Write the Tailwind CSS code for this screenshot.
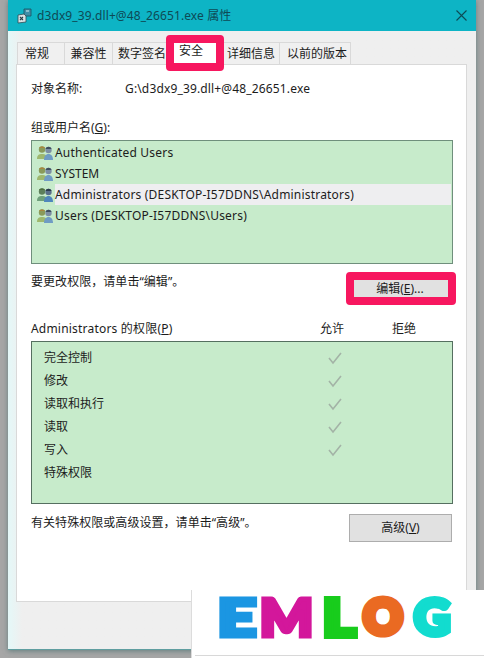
<!doctype html>
<html><head><meta charset="utf-8"><script src="https://cdn.jsdelivr.net/npm/@tailwindcss/browser@4"></script></head>
<body class="m-0 p-0">
<div class="relative w-[484px] h-[658px] overflow-hidden bg-[#a6a6a6] font-['Noto_Sans','Noto_Sans_CJK_SC',sans-serif] text-[12px] leading-[16px] text-[#1c1c1c]">
  <div class="ml-[8px] w-[468px] h-[650px] flex flex-col border-b border-[#5f9ea0] bg-linear-to-r from-[#e4f8f8] to-[#efefef] to-[3%] shadow-[0_1px_5px_rgba(70,110,110,0.7)]">
    <div class="h-[31px] shrink-0 bg-[#0db4c5] flex items-center pl-[9px] pr-[9px] text-[#0d4a55]">
      <svg class="w-[16px] h-[16px] mr-[4px]" viewBox="0 0 16 16"><path d="M7 1h7v7H9L7 6z" fill="#3f8fa8" stroke="#17505f" stroke-width=".8"/><path d="M9 3h3" stroke="#d5eef2" stroke-width="1"/><path d="M1 7l6-1 2 2v6l-8 1z" fill="#d8e2e4" stroke="#2f4d55" stroke-width=".8"/><path d="M3 9l3 3M6 9l-3 3" stroke="#26414a" stroke-width="1.1"/></svg>
      <span class="text-[12px] tracking-[0.1px]">d3dx9_39.dll+@48_26651.exe 属性</span>
      <svg class="ml-auto w-[11px] h-[11px]" viewBox="0 0 11 11"><path d="M.5.5l10 10M10.5.5l-10 10" stroke="#0d4a55" stroke-width="1.1" fill="none"/></svg>
    </div>
    <div class="ml-[9px] mt-[11px] h-[22px] flex items-stretch shrink-0 leading-[21px]">
      <div class="w-[48px] pl-[7px] bg-[#f0f0f0] border-t border-x border-[#d9d9d9]">常规</div>
      <div class="w-[48px] text-center bg-[#f0f0f0] border-t border-r border-[#d9d9d9]">兼容性</div>
      <div class="w-[54px] pl-[5px] bg-[#f0f0f0] border-t border-r border-[#d9d9d9] whitespace-nowrap">数字签名</div>
      <div class="w-[54px]"></div>
      <div class="w-[59px] text-right pr-[4px] bg-[#f0f0f0] border-t border-r border-[#d9d9d9] whitespace-nowrap">详细信息</div>
      <div class="w-[71px] pl-[7px] bg-[#f0f0f0] border-t border-r border-[#d9d9d9] whitespace-nowrap">以前的版本</div>
    </div>
    <div class="ml-[8px] w-[451px] h-[538px] shrink-0 bg-white border border-[#d9d9d9] px-[14px] pt-[16px]">
      <div class="flex h-[16px]"><span class="w-[94px]">对象名称:</span><span class="tracking-[0.15px]">G:\d3dx9_39.dll+@48_26651.exe</span></div>
      <div class="mt-[23px] h-[16px]">组或用户名(<span class="underline">G</span>):</div>
      <div class="mt-[4px] w-[422px] h-[124px] border border-[#6f8f7c] bg-[#c7ebcb] py-[1px] pl-[5px] pr-[1px] flex flex-col">
        <div class="h-[21px] flex items-center gap-[1px]">
          <svg class="w-[17px] h-[16px] shrink-0" viewBox="0 0 17 16"><circle cx="5" cy="4.5" r="3.2" fill="#8a9a5a"/><path d="M2 3c1-2 5-2 6 0z" fill="#a8863f"/><path d="M0 14c0-4 2-5 5-5s5 1 5 5z" fill="#9fb86e"/><circle cx="11.5" cy="5" r="3.2" fill="#7d8ea3"/><path d="M8.5 4c1-3 5-3 6 0z" fill="#3f4f5f"/><path d="M7 15c0-4 2-6 4.5-6S16 11 16 15z" fill="#6f9cc4"/></svg>
          <span class="tracking-[0.2px]">Authenticated Users</span></div>
        <div class="h-[21px] flex items-center gap-[1px]">
          <svg class="w-[17px] h-[16px] shrink-0" viewBox="0 0 17 16"><circle cx="5" cy="4.5" r="3.2" fill="#8a9a5a"/><path d="M2 3c1-2 5-2 6 0z" fill="#a8863f"/><path d="M0 14c0-4 2-5 5-5s5 1 5 5z" fill="#9fb86e"/><circle cx="11.5" cy="5" r="3.2" fill="#7d8ea3"/><path d="M8.5 4c1-3 5-3 6 0z" fill="#3f4f5f"/><path d="M7 15c0-4 2-6 4.5-6S16 11 16 15z" fill="#6f9cc4"/></svg>
          <span>SYSTEM</span></div>
        <div class="h-[21px] flex items-center gap-[1px]">
          <svg class="w-[17px] h-[16px] shrink-0" viewBox="0 0 17 16"><circle cx="5" cy="4.5" r="3.2" fill="#5d7f5a"/><path d="M2 3c1-2 5-2 6 0z" fill="#4f6f3f"/><path d="M0 14c0-4 2-5 5-5s5 1 5 5z" fill="#6fa07c"/><circle cx="11.5" cy="5" r="3.2" fill="#5a6f8a"/><path d="M8.5 4c1-3 5-3 6 0z" fill="#2a3a4a"/><path d="M7 15c0-4 2-6 4.5-6S16 11 16 15z" fill="#4f86bc"/></svg>
          <span class="flex-1 h-full bg-[#eeeef0] leading-[21px] tracking-[0.2px]">Administrators (DESKTOP-I57DDNS\Administrators)</span></div>
        <div class="h-[21px] flex items-center gap-[1px]">
          <svg class="w-[17px] h-[16px] shrink-0" viewBox="0 0 17 16"><circle cx="5" cy="4.5" r="3.2" fill="#8a9a5a"/><path d="M2 3c1-2 5-2 6 0z" fill="#a8863f"/><path d="M0 14c0-4 2-5 5-5s5 1 5 5z" fill="#9fb86e"/><circle cx="11.5" cy="5" r="3.2" fill="#7d8ea3"/><path d="M8.5 4c1-3 5-3 6 0z" fill="#3f4f5f"/><path d="M7 15c0-4 2-6 4.5-6S16 11 16 15z" fill="#6f9cc4"/></svg>
          <span class="tracking-[0.2px]">Users (DESKTOP-I57DDNS\Users)</span></div>
      </div>
      <div class="flex mt-[8px] h-[28px]"><span class="mt-[2px] tracking-[0.05px]">要更改权限，请单击“编辑”。</span></div>
      <div class="flex mt-[21px] h-[16px]"><span class="w-[289px] tracking-[0.2px]">Administrators 的权限(<span class="underline">P</span>)</span><span class="w-[72px]">允许</span><span>拒绝</span></div>
      <div class="mt-[4px] w-[422px] h-[163px] border border-[#556f60] bg-[#c7ebcb] pl-[12px] pt-[4px]">
        <div class="h-[23px] flex items-center"><span class="w-[284px]">完全控制</span><svg class="w-[14px] h-[14px]" viewBox="0 0 14 14"><path d="M1 7l4 5 8-10" fill="none" stroke="#a3b3a6" stroke-width="1.6"/></svg></div>
        <div class="h-[23px] flex items-center"><span class="w-[284px]">修改</span><svg class="w-[14px] h-[14px]" viewBox="0 0 14 14"><path d="M1 7l4 5 8-10" fill="none" stroke="#a3b3a6" stroke-width="1.6"/></svg></div>
        <div class="h-[23px] flex items-center"><span class="w-[284px]">读取和执行</span><svg class="w-[14px] h-[14px]" viewBox="0 0 14 14"><path d="M1 7l4 5 8-10" fill="none" stroke="#a3b3a6" stroke-width="1.6"/></svg></div>
        <div class="h-[23px] flex items-center"><span class="w-[284px]">读取</span><svg class="w-[14px] h-[14px]" viewBox="0 0 14 14"><path d="M1 7l4 5 8-10" fill="none" stroke="#a3b3a6" stroke-width="1.6"/></svg></div>
        <div class="h-[23px] flex items-center"><span class="w-[284px]">写入</span><svg class="w-[14px] h-[14px]" viewBox="0 0 14 14"><path d="M1 7l4 5 8-10" fill="none" stroke="#a3b3a6" stroke-width="1.6"/></svg></div>
        <div class="h-[23px] flex items-center"><span>特殊权限</span></div>
      </div>
      <div class="flex mt-[10px] items-start w-[421px]">
        <span class="mt-[1px] tracking-[0.05px]">有关特殊权限或高级设置，请单击“高级”。</span>
        <div class="ml-auto w-[103px] h-[28px] bg-[#e1e1e1] border border-[#adadad] flex items-center justify-center">高级(<span class="underline">V</span>)</div>
      </div>
    </div>
  </div>
  <div class="absolute left-[166px] top-[35px] w-[58px] h-[36px] rounded-[4px] border-[8px] border-[#f7175f] bg-white pl-[5px] leading-[16px]">安全</div>
  <div class="absolute left-[346px] top-[272px] w-[110px] h-[33px] rounded-[4px] border-[8px] border-[#f7175f] bg-[#e1e1e1] flex items-center justify-center pr-[2px] whitespace-nowrap">编辑(<span class="underline">E</span>)...</div>
  <div class="absolute left-[191px] top-[590px] w-[293px] h-[68px] bg-white border-l border-[#dcdcdc]">
    <div class="absolute left-[3px] right-0 bottom-[2px] h-px bg-[#d8d8d8]"></div>
    <div class="absolute left-[27px] top-[1px] h-[50px] flex items-center font-['Lato',sans-serif] font-black text-[52px] leading-[50px] text-center">
      <span class="w-[36px] scale-x-130 text-[#1b96e2] [-webkit-text-stroke:5px_#1b96e2]">E</span><span class="ml-[5px] w-[53px] scale-x-108 text-[#d3179b] [-webkit-text-stroke:5px_#d3179b]">M</span><span class="ml-[8px] w-[36px] scale-x-120 text-[#18cc1c] [-webkit-text-stroke:6px_#18cc1c]">L</span><span class="ml-[4px] w-[44px] text-[#ea6a22] text-[48px] [-webkit-text-stroke:7px_#ea6a22]">O</span><span class="ml-[5px] w-[44px] text-[#12dccf] text-[50px] [-webkit-text-stroke:6px_#12dccf]">G</span>
    </div>
  </div>
</div>
</body></html>
